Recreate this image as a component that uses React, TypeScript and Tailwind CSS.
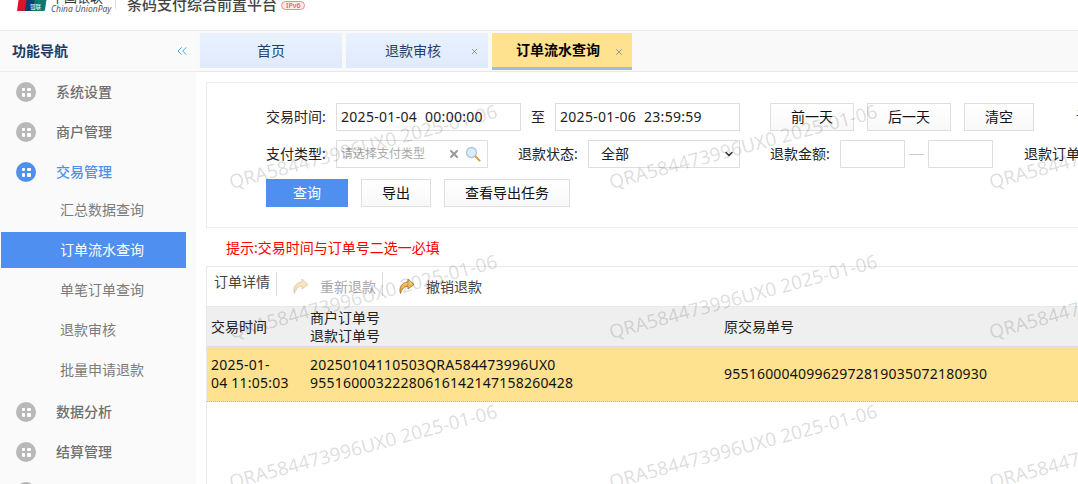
import { ChevronDown, ChevronsLeft, X } from "lucide-react";

const font = "font-['Noto_Sans','Noto_Sans_CJK_SC',sans-serif]";

function NavIcon({ active }: { active?: boolean }) {
  return (
    <span className={`grid h-5 w-5 shrink-0 grid-cols-2 place-content-center gap-[2px] rounded-full px-[5.5px] ${active ? "bg-[#4e8fef]" : "bg-[#b8b8b8]"}`}>
      <i className="h-[3.5px] w-[3.5px] rounded-[1px] bg-white" />
      <i className="h-[3.5px] w-[3.5px] rounded-[1px] bg-white" />
      <i className="h-[3.5px] w-[3.5px] rounded-[1px] bg-white" />
      <i className="h-[3.5px] w-[3.5px] rounded-[1px] bg-white" />
    </span>
  );
}

function NavGroup({ label, active }: { label: string; active?: boolean }) {
  return (
    <div className="flex h-10 items-center pl-4">
      <NavIcon active={active} />
      <span className={`ml-5 text-sm font-medium ${active ? "text-[#4e8fef]" : "text-[#707070]"}`}>{label}</span>
    </div>
  );
}

function NavItem({ label, active }: { label: string; active?: boolean }) {
  return (
    <div className="flex h-10 items-center">
      <div className={`flex h-9 w-[186px] items-center text-sm ${active ? "border-l border-white bg-[#4e8fef] pl-[59px] text-white" : "pl-[60px] text-[#7b7b7b]"}`}>{label}</div>
    </div>
  );
}

function Tab({ label, closable, active, width }: { label: string; closable?: boolean; active?: boolean; width: string }) {
  if (active) {
    return (
      <div className={`relative flex h-[37px] items-center justify-center self-start border-b-[3px] border-[#9dbbe8] bg-[#ffe28f] pr-[8px] text-sm font-bold text-black ${width}`}>
        {label}
        <X className="absolute right-2 top-[14px] text-[#7d8ba0]" size={10} strokeWidth={2} />
      </div>
    );
  }
  return (
    <div className={`relative flex h-[35px] items-center justify-center self-start bg-gradient-to-b from-[#e9f1fc] to-[#dfeafc] text-sm text-[#1f3f70] ${closable ? "pr-2" : ""} ${width}`}>
      {label}
      {closable && <X className="absolute right-[9px] top-[14px] text-[#5a7fb3]" size={9} strokeWidth={2} />}
    </div>
  );
}

function Field({ text, width }: { text?: string; width: string }) {
  return (
    <div className={`flex h-7 items-center whitespace-pre border border-[#dedede] bg-white pl-1 text-sm tracking-[0.3px] text-[#222] ${width}`}>
      {text}
    </div>
  );
}

function Btn({ label, width }: { label: string; width: string }) {
  return (
    <div className={`flex h-7 items-center justify-center border border-[#dedede] bg-gradient-to-b from-white to-[#f8f8f8] text-sm text-[#111] ${width}`}>
      {label}
    </div>
  );
}

function ReplyIcon({ id, faded }: { id: string; faded?: boolean }) {
  return (
    <svg width="17" height="17" viewBox="0 0 17 17" className={faded ? "opacity-40" : ""}>
      <defs>
        <linearGradient id={id} x1="0" y1="0" x2="0" y2="1">
          <stop offset="0" stopColor="#fbd27a" />
          <stop offset="1" stopColor="#ef9a1e" />
        </linearGradient>
      </defs>
      <path d="M10 1 16 6.500 10 11V8.300C6.500 8.300 4 10.500 2.500 15.500 .5 10 3.500 4.500 10 3.800Z" fill={`url(#${id})`} stroke="#7d6a45" strokeWidth=".7" strokeLinejoin="round" />
    </svg>
  );
}

function MagnifierIcon() {
  return (
    <svg width="16" height="16" viewBox="0 0 16 16" className="ml-[5px]">
      <circle cx="6.500" cy="6.500" r="5" fill="#dcecfa" stroke="#a9c6e2" strokeWidth="1.300" />
      <path d="M10.500 10.500 14.500 14.500" stroke="#e0a04a" strokeWidth="2.200" strokeLinecap="round" />
    </svg>
  );
}

function Logo() {
  return (
    <svg width="32" height="22" viewBox="0 0 32 22" className="-mt-[11px] shrink-0">
      <path d="M4 0H14L11 22H1Z" fill="#d6172a" />
      <path d="M12 0H22L19 22H9Z" fill="#0b3b78" />
      <path d="M20 0H32L29 21Q28.800 22 27 22H17Z" fill="#0a7a6c" />
      <text x="14" y="20" fontSize="5.500" fill="#fff">银联</text>
    </svg>
  );
}

const marks = [
  [232, 173], [612, 173], [992, 173],
  [232, 323], [612, 323], [992, 323],
  [232, 473], [612, 473], [992, 473],
];

export default function App() {
  return (
    <div className={`relative h-[484px] w-[1078px] overflow-hidden bg-white ${font}`}>
      <header className="flex h-[31px] items-start overflow-hidden border-b border-[#e8e8e8] bg-white pl-4">
        <Logo />
        <div className="ml-[3px] flex w-[64px] flex-col whitespace-nowrap">
          <span className="-mt-[9px] text-[13px] leading-[13px] text-[#333]">中国银联</span>
          <span className="text-[8.5px] italic leading-[10px] text-[#555]">China UnionPay</span>
        </div>
        <span className="h-[9px] w-px bg-[#ddd]" />
        <div className="-mt-[6px] ml-[11px] flex items-center gap-1 text-[15px] font-medium leading-5 text-[#444]">
          条码支付综合前置平台
          <span className="mt-[2px] rounded-full border border-[#f08a8a] bg-[#fdeaea] px-1 text-[7px] leading-[7px] text-[#e05a5a]">IPv6</span>
        </div>
      </header>

      <div className="flex h-[453px]">
        <aside className="w-[196px] shrink-0 bg-[#fafafa]">
          <div className="flex h-[41px] items-center justify-between border-b border-[#ececec] pl-3 pr-[6px]">
            <span className="text-sm font-bold text-[#1f3b63]">功能导航</span>
            <ChevronsLeft className="text-[#4aa3e8]" size={16} strokeWidth={1.5} />
          </div>
          <NavGroup label="系统设置" />
          <NavGroup label="商户管理" />
          <NavGroup label="交易管理" active />
          <div className="-mt-0.5 mb-0.5">
            <NavItem label="汇总数据查询" />
            <NavItem label="订单流水查询" active />
            <NavItem label="单笔订单查询" />
            <NavItem label="退款审核" />
            <NavItem label="批量申请退款" />
          </div>
          <NavGroup label="数据分析" />
          <NavGroup label="结算管理" />
          <NavGroup label="" />
        </aside>

        <main className="min-w-0 flex-1">
          <div className="flex h-[41px] gap-1 border-b border-[#e8e8e8] bg-[#f9f9f9] pl-1 pt-[2px]">
            <Tab label="首页" width="w-[142px]" />
            <Tab label="退款审核" closable width="w-[142px]" />
            <Tab label="订单流水查询" closable active width="w-[140px]" />
          </div>

          <section className="ml-[10px] mt-[10px] h-[146px] overflow-hidden border border-r-0 border-[#ececec] pl-[59px] pt-5">
            <div className="flex w-[950px] items-center text-sm text-[#222]">
              <span className="w-[70px]">交易时间:</span>
              <Field text="2025-01-04  00:00:00" width="w-[185px]" />
              <span className="ml-[10px] w-[24px]">至</span>
              <Field text="2025-01-06  23:59:59" width="w-[185px]" />
              <Btn label="前一天" width="ml-[30px] w-[84px]" />
              <Btn label="后一天" width="ml-[13px] w-[84px]" />
              <Btn label="清空" width="ml-[13px] w-[70px]" />
              <span className="ml-[42px]">订单号:</span>
            </div>
            <div className="mt-[9px] flex w-[950px] items-center text-sm text-[#222]">
              <span className="w-[70px]">支付类型:</span>
              <div className="flex h-7 w-[152px] items-center border border-[#dedede] pl-1 text-xs text-[#aaa]">
                <span className="w-[107px]">请选择支付类型</span>
                <X className="text-[#999]" size={12} strokeWidth={4} />
                <MagnifierIcon />
              </div>
              <span className="ml-[30px] w-[70px]">退款状态:</span>
              <div className="flex h-7 w-[152px] items-center justify-between border border-[#dedede] pl-3 pr-[4px]">
                全部
                <ChevronDown className="text-[#333]" size={12} strokeWidth={3} />
              </div>
              <span className="ml-[30px] w-[70px]">退款金额:</span>
              <Field width="w-[65px]" />
              <span className="mx-[4px] h-px w-[15px] bg-[#ccc]" />
              <Field width="w-[65px]" />
              <span className="ml-[31px]">退款订单号:</span>
            </div>
            <div className="mt-[11px] flex items-center">
              <div className="flex h-7 w-[82px] items-center justify-center bg-[#4e8fef] text-sm text-white">查询</div>
              <Btn label="导出" width="ml-[13px] w-[70px]" />
              <Btn label="查看导出任务" width="ml-[13px] w-[126px]" />
            </div>
          </section>

          <p className="ml-[30px] mt-[10px] text-sm leading-5 text-[#f00]">提示:交易时间与订单号二选一必填</p>

          <div className="ml-[10px] mt-2 flex h-[41px] items-center border-y border-l border-[#e8e8e8] text-sm">
            <span className="-mt-[9px] ml-[7px] text-[#444]">订单详情</span>
            <span className="-mt-[6px] ml-[6px] h-6 w-px bg-[#ddd]" />
            <span className="ml-[15px]"><ReplyIcon id="replyFaded" faded /></span>
            <span className="ml-[11px] text-[#aaa]">重新退款</span>
            <span className="-mt-[6px] ml-[6px] h-6 w-px bg-[#ddd]" />
            <span className="ml-[15px]"><ReplyIcon id="replyActive" /></span>
            <span className="ml-[11px] text-[#444]">撤销退款</span>
          </div>

          <div className="ml-[10px] h-full border-l border-[#e8e8e8] text-sm">
            <div className="flex h-10 items-center border-b border-[#ddd] bg-[#efefef] text-[#222]">
              <span className="w-[103px] pl-1">交易时间</span>
              <span className="w-[414px] leading-[18px]">商户订单号<br />退款订单号</span>
              <span>原交易单号</span>
            </div>
            <div className="flex h-[55px] items-center border-b border-dotted border-[#c9b97a] bg-[#ffe28f] leading-[18px] tracking-[0.22px] text-[#111]">
              <span className="w-[103px] pl-1">2025-01-<br />04 11:05:03</span>
              <span className="w-[414px]">20250104110503QRA584473996UX0<br />95516000322280616142147158260428</span>
              <span>95516000409962972819035072180930</span>
            </div>
          </div>
        </main>
      </div>

      {marks.map(([x, y]) => (
        <span
          key={`${x}-${y}`}
          className="pointer-events-none absolute origin-bottom-left -rotate-[15deg] whitespace-nowrap text-[19px] leading-none text-black/15"
          style={{ left: x, top: y }}
        >
          QRA584473996UX0 2025-01-06
        </span>
      ))}
    </div>
  );
}
